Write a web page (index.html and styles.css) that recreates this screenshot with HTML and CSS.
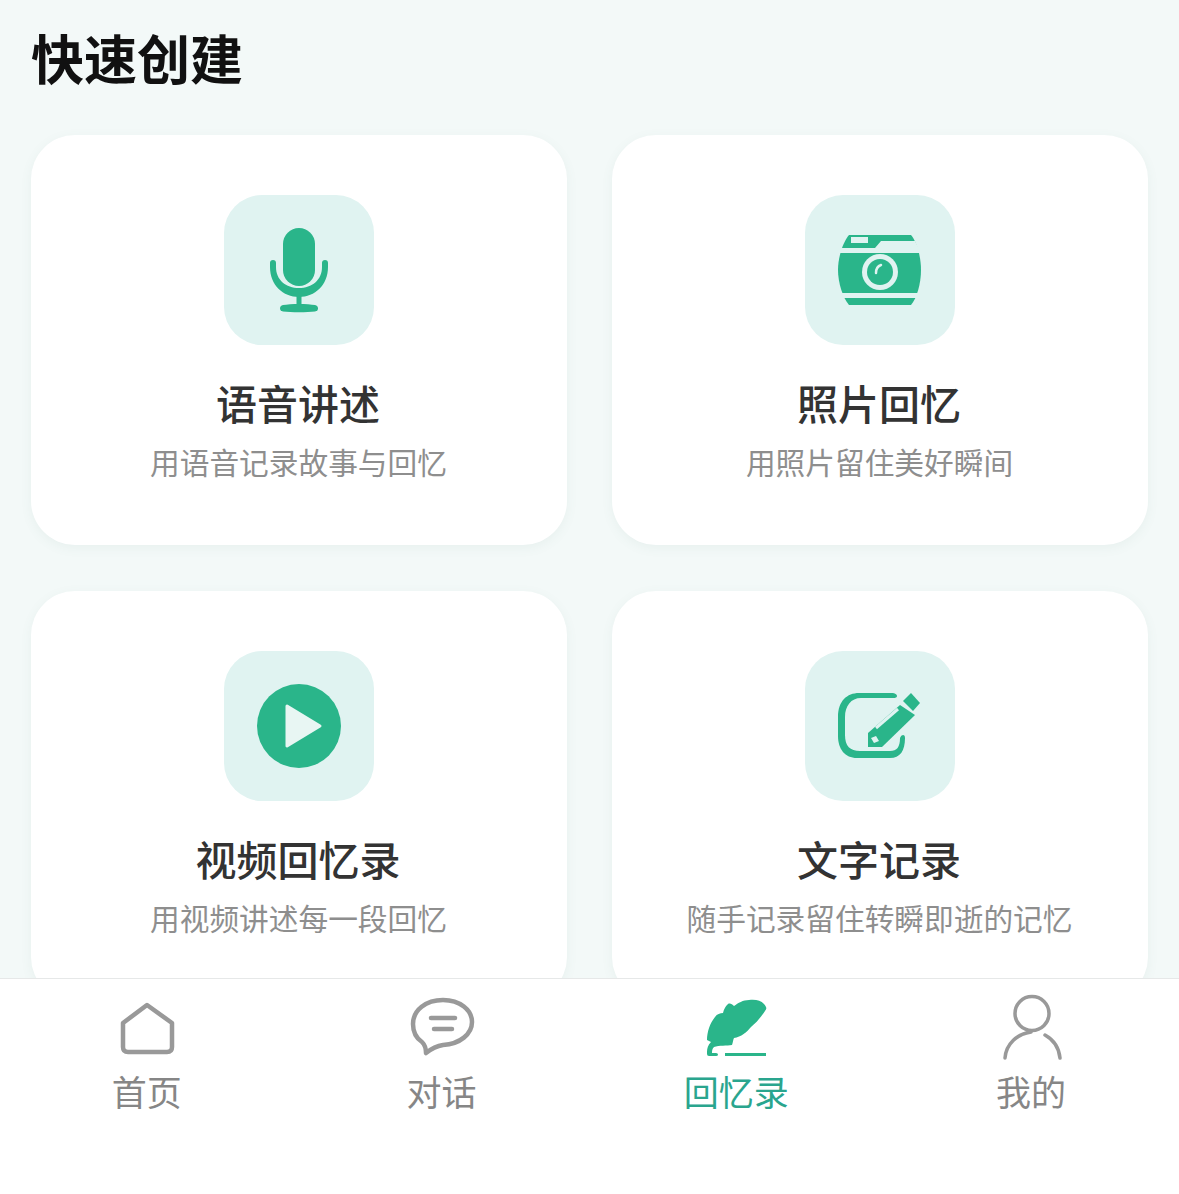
FILE: index.html
```html
<!DOCTYPE html>
<html lang="zh-CN">
<head>
<meta charset="utf-8">
<title>快速创建</title>
<link rel="stylesheet" href="styles.css">
</head>
<body>
<div class="app">
  <main class="content">
    <h1 class="page-title">快速创建</h1>
    <div class="grid">
      <section class="card">
        <div class="icon-box">
          <svg class="icon" viewBox="0 0 150 150">
            <rect class="fill" x="59" y="33" width="32" height="58" rx="16"/>
            <path class="fill" d="M46 68a3 3 0 0 1 6 0V72C52 85 62 93 75 93C88 93 98 85 98 72V68a3 3 0 0 1 6 0V72C104 90 91 102 75 102C59 102 46 90 46 72Z"/>
            <rect class="fill" x="72.500" y="100" width="5" height="12"/>
            <path class="fill" d="M59 110C66 108.500 84 108.500 91 110C95 111 95 116 91 116.500C83 117.500 67 117.500 59 116.500C55 116 55 111 59 110Z"/>
          </svg>
        </div>
        <h2 class="card-title">语音讲述</h2>
        <p class="card-sub">用语音记录故事与回忆</p>
      </section>
      <section class="card">
        <div class="icon-box">
          <svg class="icon" viewBox="0 0 150 150">
            <path class="fill" d="M44 40H106C112 47 116 62 116 75C116 88 112 103 106 110H44C38 103 33 88 33 75C33 62 38 47 44 40Z"/>
            <path class="gap" d="M33 53H70L76 46H110L116 58H33Z"/>
            <rect class="gap" x="46" y="42" width="17" height="6"/>
            <rect class="gap" x="33" y="98" width="84" height="5"/>
            <circle class="gap" cx="75" cy="77" r="18"/>
            <circle class="fill" cx="75" cy="77" r="13"/>
            <path class="glint" d="M71 78C71 74 73 71 76 70"/>
          </svg>
        </div>
        <h2 class="card-title">照片回忆</h2>
        <p class="card-sub">用照片留住美好瞬间</p>
      </section>
      <section class="card">
        <div class="icon-box">
          <svg class="icon" viewBox="0 0 150 150">
            <circle class="fill" cx="75" cy="75" r="42"/>
            <path class="play" d="M63 55L96 75L63 95Z"/>
          </svg>
        </div>
        <h2 class="card-title">视频回忆录</h2>
        <p class="card-sub">用视频讲述每一段回忆</p>
      </section>
      <section class="card">
        <div class="icon-box">
          <svg class="icon" viewBox="0 0 150 150">
            <path class="fill" d="M54 42H88Q92 43 92 45Q92 47 88 47H56C46 47 40 55 40 66V84C40 95 45 100 55 100H85C92 100 95 96 95 87Q96 84 98 84Q100 84 100 87C100 100 95 107 85 107H52C40 107 33 98 33 85V66C33 50 42 42 54 42Z"/>
            <path class="fill" d="M98 50L106 42L115 52L108 60Z"/>
            <path class="fill" d="M95 54L110 64L77 96H63V82Z"/>
            <path class="glint-dark" d="M71 77L93 58"/>
            <path class="gap" d="M66 87L71 85L74 90L69 92Z"/>
          </svg>
        </div>
        <h2 class="card-title">文字记录</h2>
        <p class="card-sub">随手记录留住转瞬即逝的记忆</p>
      </section>
    </div>
  </main>
  <nav class="tabbar">
    <div class="tab">
      <svg class="tab-icon" viewBox="0 0 80 70">
        <path class="tab-line" d="M40 11L16 29V53Q16 58 21 58H60Q65 58 65 53V29Z"/>
      </svg>
      <span class="tab-label">首页</span>
    </div>
    <div class="tab">
      <svg class="tab-icon" viewBox="0 0 80 70">
        <path class="tab-line" d="M24 59C24 54 23 51 20 48C14 44 11 37 11 30C11 16 24 6 41 6C58 6 70 16 70 28C70 40 58 50 41 51C34 52 29 55 24 59Z"/>
        <path class="tab-line" d="M29 24H53M32 35H50"/>
      </svg>
      <span class="tab-label">对话</span>
    </div>
    <div class="tab">
      <svg class="tab-icon" viewBox="0 0 80 70">
        <path class="tab-fill" d="M69 13C66 7 60 5 52 6C46 6 41 9 37 12C35 10 33 9 31 10C28 13 27 15 26 19C23 19 20 20 18 23C13 29 10 38 10 46L14 48C11 51 10 54 10 58V60Q10 62 12 62H19Q21 62 21 60.500Q21 59 19 59H15C15 57 15 55 17 53C22 51 30 52 35 51C36 48 36 46 37 44C44 43 50 38 54 33C60 28 64 23 68 17Q70 15 69 13Z"/>
        <path class="tab-stroke" d="M28 60.500H69"/>
      </svg>
      <span class="tab-label tab-active">回忆录</span>
    </div>
    <div class="tab">
      <svg class="tab-icon" viewBox="0 0 80 70">
        <circle class="tab-line thin" cx="40" cy="19.500" r="17"/>
        <path class="tab-line thin" d="M13 64C14 50 25 40 39 38M53 41C62 46 67 54 68 64"/>
      </svg>
      <span class="tab-label">我的</span>
    </div>
  </nav>
</div>
</body>
</html>
```
FILE: styles.css
```css
* { box-sizing: border-box; }
html, body { margin: 0; height: 100%; }
body {
  font-family: "Noto Sans CJK SC", "Noto Sans", sans-serif;
  background: #f3f9f8;
}
.app {
  height: 1194px;
  display: flex;
  flex-direction: column;
  overflow: hidden;
}
.content {
  flex: 1;
  min-height: 0;
  overflow: hidden;
  padding: 0 31px;
}
.page-title {
  margin: 0;
  height: 135px;
  padding-top: 19px;
  font-size: 53px;
  line-height: 76px;
  font-weight: 700;
  color: #111;
}
.grid {
  display: grid;
  grid-template-columns: 536px 536px;
  column-gap: 45px;
  row-gap: 46px;
}
.card {
  height: 410px;
  padding-top: 60px;
  background: #fff;
  border-radius: 44px;
  box-shadow: 0 3px 12px rgba(90, 130, 120, 0.07);
  display: flex;
  flex-direction: column;
  align-items: center;
}
.icon-box {
  width: 150px;
  height: 150px;
  border-radius: 38px;
  background: #e0f3f1;
}
.icon { display: block; width: 150px; height: 150px; }
.fill { fill: #2ab58a; }
.gap { fill: #e0f3f1; }
.glint { fill: none; stroke: #e0f3f1; stroke-width: 2.500; stroke-linecap: round; }
.glint-dark { fill: none; stroke: #e0f3f1; stroke-width: 3; }
.play { fill: #e8f6f3; stroke: #e8f6f3; stroke-width: 3; stroke-linejoin: round; }
.card-title {
  margin: 27px 0 0;
  padding-right: 2px;
  font-size: 41px;
  line-height: 60px;
  font-weight: 500;
  color: #333;
}
.card-sub {
  margin: 8px 0 0;
  padding-right: 1px;
  font-size: 29.700px;
  line-height: 44px;
  color: #8e8e8e;
}
.tabbar {
  flex: none;
  height: 216px;
  background: #fff;
  border-top: 1px solid #e6e8e8;
  display: grid;
  grid-template-columns: repeat(4, 1fr);
}
.tab {
  display: flex;
  flex-direction: column;
  align-items: center;
  padding-top: 15px;
}
.tab-icon { display: block; width: 80px; height: 70px; }
.tab-line {
  fill: none;
  stroke: #999;
  stroke-width: 4.500;
  stroke-linecap: round;
  stroke-linejoin: round;
}
.thin { stroke-width: 3.500; }
.tab-fill { fill: #2ab58a; }
.tab-stroke { fill: none; stroke: #2ab58a; stroke-width: 3; }
.tab-label {
  margin-top: 2px;
  padding-right: 1px;
  font-size: 35px;
  line-height: 50px;
  color: #868686;
}
.tab-active { color: #2aa58e; }
```
